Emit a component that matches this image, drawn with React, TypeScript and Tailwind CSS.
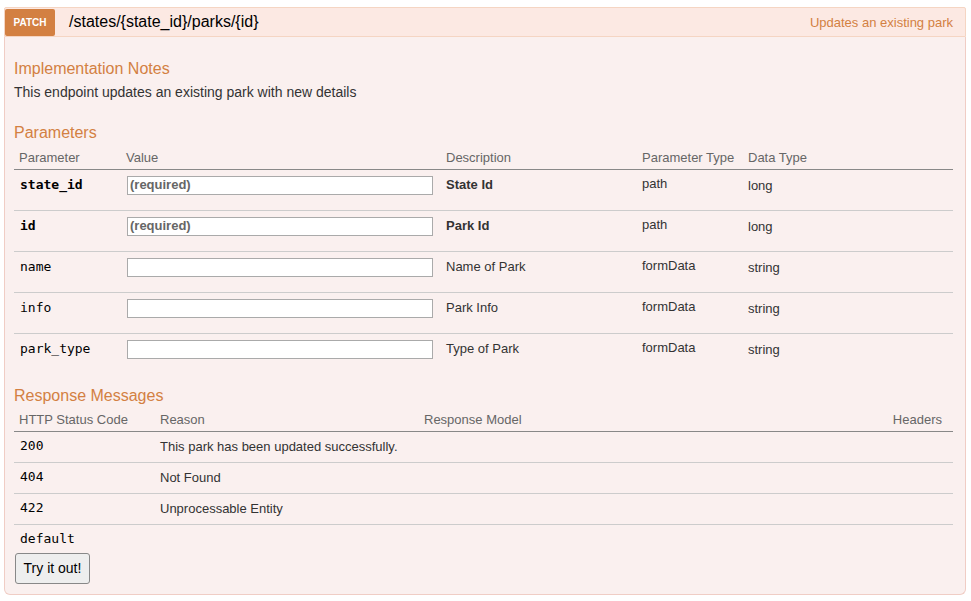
import React from "react";

const sans = { fontFamily: '"Liberation Sans", Arial, sans-serif' };
const mono = { fontFamily: '"DejaVu Sans Mono", Menlo, monospace' };

type P = { name: string; required?: boolean; desc: string; ptype: string; dtype: string };

const params: P[] = [
  { name: "state_id", required: true, desc: "State Id", ptype: "path", dtype: "long" },
  { name: "id", required: true, desc: "Park Id", ptype: "path", dtype: "long" },
  { name: "name", desc: "Name of Park", ptype: "formData", dtype: "string" },
  { name: "info", desc: "Park Info", ptype: "formData", dtype: "string" },
  { name: "park_type", desc: "Type of Park", ptype: "formData", dtype: "string" },
];

const responses = [
  { code: "200", reason: "This park has been updated successfully." },
  { code: "404", reason: "Not Found" },
  { code: "422", reason: "Unprocessable Entity" },
];

export default function App() {
  return (
    <div className="bg-white w-[971px] h-[601px] pt-[7px] pl-[4px]" style={sans}>
      <div className="w-[962px]">
        {/* Header */}
        <div className="flex items-center h-[30px] bg-[#fce9e3] border border-[#f5d5c3] rounded-t-[2px]">
          <div className="w-[50px] h-[27px] bg-[#d38042] rounded-[2px] flex items-center justify-center text-white text-[10px] font-bold">
            PATCH
          </div>
          <div className="ml-[14px] text-[16px] text-black leading-none">/states/{"{state_id}"}/parks/{"{id}"}</div>
          <div className="ml-auto mr-[12px] text-[13px] text-[#d38042] leading-none">Updates an existing park</div>
        </div>
        {/* Body */}
        <div className="bg-[#faf0ef] border border-t-0 border-[#f0cdc5] rounded-b-[6px] px-[9px] pb-[10px] h-[558px]">
          <div className="pt-[22px] text-[16px] leading-[20px] text-[#d38042]">Implementation Notes</div>
          <div className="mt-[4px] text-[14px] leading-[18px] text-[#333]">This endpoint updates an existing park with new details</div>

          <div className="mt-[22px] text-[16px] leading-[20px] text-[#d38042]">Parameters</div>
          <table className="w-[939px] border-collapse text-[13px] text-[#333] table-fixed">
            <colgroup>
              <col className="w-[107px]" />
              <col className="w-[320px]" />
              <col className="w-[196px]" />
              <col className="w-[106px]" />
              <col />
            </colgroup>
            <thead>
              <tr className="h-[26px] border-b border-[#888] text-[#666]">
                <th className="text-left font-normal px-[5px] pt-[3px]">Parameter</th>
                <th className="text-left font-normal px-[5px] pt-[3px]">Value</th>
                <th className="text-left font-normal px-[5px] pt-[3px]">Description</th>
                <th className="text-left font-normal px-[5px] pt-[3px]">Parameter Type</th>
                <th className="text-left font-normal px-[5px] pt-[3px]">Data Type</th>
              </tr>
            </thead>
            <tbody>
              {params.map((p, i) => (
                <tr key={p.name} className={"h-[41px] align-top " + (i < params.length - 1 ? "border-b border-[#ccc]" : "")}>
                  <td className={"px-[6px] pt-[5px] text-[13px] text-black " + (p.required ? "font-bold" : "")} style={mono}>
                    {p.name}
                  </td>
                  <td className="px-[6px] pt-[6px]">
                    <div className="w-[306px] h-[19px] bg-white border border-[#aaa] flex items-center px-[2px]">
                      {p.required && <span className="text-[13px] font-bold text-[#666]">(required)</span>}
                    </div>
                  </td>
                  <td className={"px-[5px] pt-[5px] " + (p.required ? "font-bold" : "")}>{p.desc}</td>
                  <td className="px-[5px] pt-[4px]">{p.ptype}</td>
                  <td className="px-[5px] pt-[6px]">{p.dtype}</td>
                </tr>
              ))}
            </tbody>
          </table>

          <div className="mt-[12px] text-[16px] leading-[20px] text-[#d38042]">Response Messages</div>
          <table className="w-[939px] border-collapse text-[13px] text-[#333] table-fixed">
            <colgroup>
              <col className="w-[141px]" />
              <col className="w-[264px]" />
              <col />
              <col className="w-[100px]" />
            </colgroup>
            <thead>
              <tr className="h-[25px] border-b border-[#888] text-[#666]">
                <th className="text-left font-normal px-[5px] pt-[2px]">HTTP Status Code</th>
                <th className="text-left font-normal px-[5px] pt-[2px]">Reason</th>
                <th className="text-left font-normal px-[5px] pt-[2px]">Response Model</th>
                <th className="text-right font-normal pr-[11px] pt-[2px]">Headers</th>
              </tr>
            </thead>
            <tbody>
              {responses.map((r) => (
                <tr key={r.code} className="h-[31px] align-top border-b border-[#ccc]">
                  <td className="px-[6px] pt-[4px] text-black" style={mono}>{r.code}</td>
                  <td className="px-[5px] pt-[5px]">{r.reason}</td>
                  <td />
                  <td />
                </tr>
              ))}
              <tr className="h-[26px] align-top">
                <td className="px-[6px] pt-[4px] text-black" style={mono}>default</td>
                <td />
                <td />
                <td />
              </tr>
            </tbody>
          </table>
          <button className="mt-[3px] ml-[1px] w-[75px] h-[31px] bg-[#eeeeee] border border-[#888] rounded-[3px] text-[14px] text-black">
            Try it out!
          </button>
        </div>
      </div>
    </div>
  );
}
